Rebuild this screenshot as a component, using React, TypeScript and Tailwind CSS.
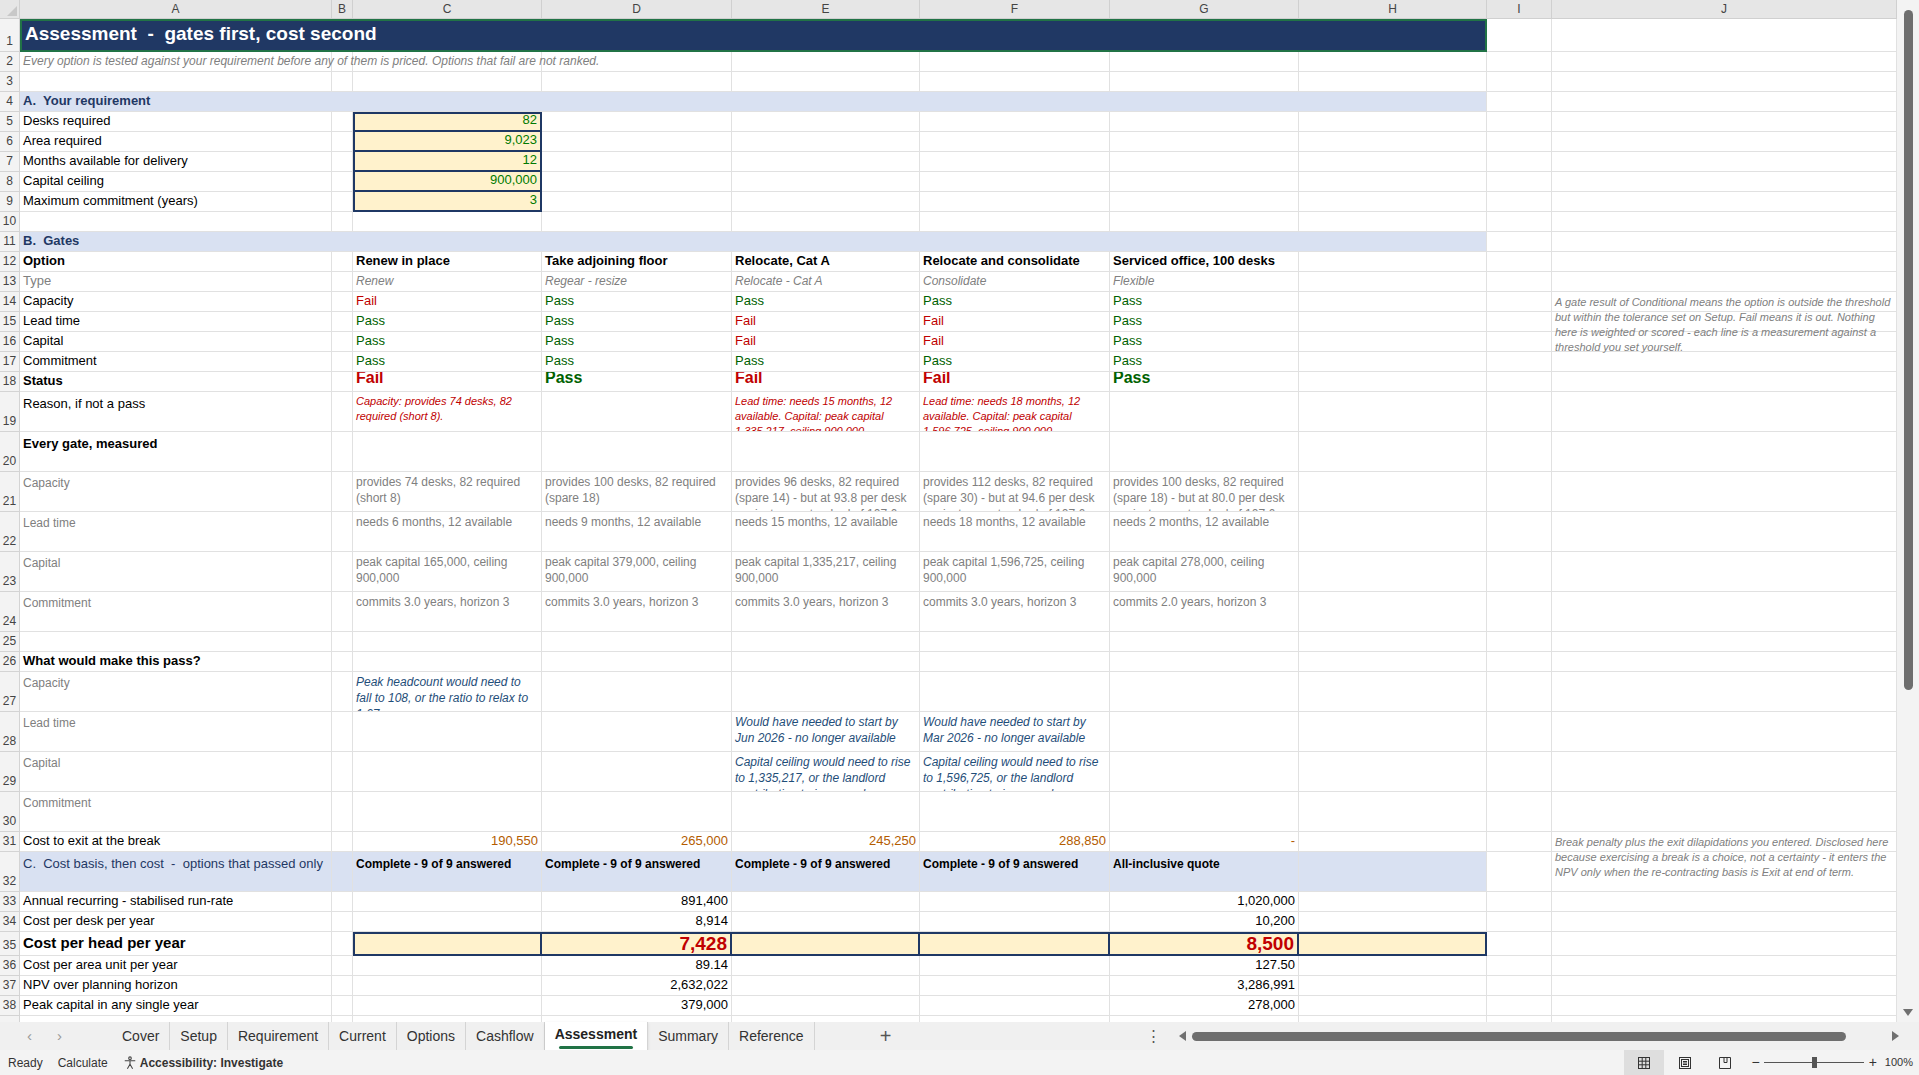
import React from "react";
import { twMerge } from "tailwind-merge";

const W = [312, 21, 189, 190, 188, 190, 189, 188, 65, 345];
const COLS = ["A", "B", "C", "D", "E", "F", "G", "H", "I", "J"];
const FONT = { fontFamily: "'Liberation Sans Narrow','Liberation Sans',Arial,sans-serif" };

type Cell = { t?: React.ReactNode; c?: string; span?: number; ov?: boolean };
type Row = { n: number; h: number; cells: (Cell | null)[] };

const P = (t: string, big = false): Cell => ({
  t,
  c: (t === "Pass" ? "text-[#006100]" : "text-[#c00000]") + (big ? " font-bold text-[16px]" : " text-[13px]"),
});
const grey = "text-[#808080] italic text-[12px]";
const meas = "text-[#808080] text-[12px] leading-[16px] whitespace-normal overflow-hidden items-start pt-[2px]";
const blue = "text-[#1f4e79] italic text-[12px] leading-[16px] whitespace-normal overflow-hidden items-start pt-[2px]";
const red = "text-[#c00000] italic text-[11px] leading-[15px] whitespace-normal overflow-hidden items-start pt-[2px]";
const orange = "text-[#b35c00] text-right text-[13px]";
const num = "text-right text-[13px]";
const inp = "bg-[#fff2cc] text-right text-[#007a00] text-[13px] border-x-2 border-b-2 border-[#1f3864]";
const lab = "text-[#808080] text-[12px] items-start pt-[2px]";

const e = (n: number) => Array(n).fill(null);

const rows: Row[] = [
  {
    n: 1, h: 33,
    cells: [
      { t: "Assessment  -  gates first, cost second", span: 8, c: "bg-[#203864] text-white font-bold text-[19px] border-2 border-[#217346] pb-[2px] whitespace-pre" },
      null, null,
    ],
  },
  { n: 2, h: 20, cells: [{ t: "Every option is tested against your requirement before any of them is priced. Options that fail are not ranked.", ov: true, c: "italic text-[#808080] text-[12px]" }, ...e(9)] },
  { n: 3, h: 20, cells: e(10) },
  { n: 4, h: 20, cells: [{ t: "A.  Your requirement", span: 8, c: "bg-[#d9e1f2] text-[#1f3864] font-bold text-[13px] whitespace-pre" }, null, null] },
  { n: 5, h: 20, cells: [{ t: "Desks required" }, null, { t: "82", c: inp + " border-t-2" }, ...e(7)] },
  { n: 6, h: 20, cells: [{ t: "Area required" }, null, { t: "9,023", c: inp }, ...e(7)] },
  { n: 7, h: 20, cells: [{ t: "Months available for delivery" }, null, { t: "12", c: inp }, ...e(7)] },
  { n: 8, h: 20, cells: [{ t: "Capital ceiling" }, null, { t: "900,000", c: inp }, ...e(7)] },
  { n: 9, h: 20, cells: [{ t: "Maximum commitment (years)" }, null, { t: "3", c: inp }, ...e(7)] },
  { n: 10, h: 20, cells: e(10) },
  { n: 11, h: 20, cells: [{ t: "B.  Gates", span: 8, c: "bg-[#d9e1f2] text-[#1f3864] font-bold text-[13px] whitespace-pre" }, null, null] },
  {
    n: 12, h: 20,
    cells: [{ t: "Option", c: "font-bold" }, null,
      ...["Renew in place", "Take adjoining floor", "Relocate, Cat A", "Relocate and consolidate", "Serviced office, 100 desks"].map((t) => ({ t, c: "font-bold text-[13px]" })),
      null, null, null],
  },
  {
    n: 13, h: 20,
    cells: [{ t: "Type", c: "text-[#808080]" }, null,
      ...["Renew", "Regear - resize", "Relocate - Cat A", "Consolidate", "Flexible"].map((t) => ({ t, c: grey })),
      null, null, null],
  },
  {
    n: 14, h: 20,
    cells: [{ t: "Capacity" }, null, P("Fail"), P("Pass"), P("Pass"), P("Pass"), P("Pass"), null, null,
      { t: "A gate result of Conditional means the option is outside the threshold but within the tolerance set on Setup. Fail means it is out. Nothing here is weighted or scored - each line is a measurement against a threshold you set yourself.", c: "italic text-[#808080] text-[11px] leading-[15px] whitespace-normal items-start pt-[3px] [&>span]:w-[380px]", ov: true }],
  },
  { n: 15, h: 20, cells: [{ t: "Lead time" }, null, P("Pass"), P("Pass"), P("Fail"), P("Fail"), P("Pass"), ...e(3)] },
  { n: 16, h: 20, cells: [{ t: "Capital" }, null, P("Pass"), P("Pass"), P("Fail"), P("Fail"), P("Pass"), ...e(3)] },
  { n: 17, h: 20, cells: [{ t: "Commitment" }, null, P("Pass"), P("Pass"), P("Pass"), P("Pass"), P("Pass"), ...e(3)] },
  { n: 18, h: 20, cells: [{ t: "Status", c: "font-bold" }, null, P("Fail", true), P("Pass", true), P("Fail", true), P("Fail", true), P("Pass", true), ...e(3)] },
  {
    n: 19, h: 40,
    cells: [{ t: "Reason, if not a pass", c: "items-start pt-[2px]" }, null,
      { t: "Capacity: provides 74 desks, 82 required (short 8).", c: red }, null,
      { t: "Lead time: needs 15 months, 12 available. Capital: peak capital 1,335,217, ceiling 900,000", c: red },
      { t: "Lead time: needs 18 months, 12 available. Capital: peak capital 1,596,725, ceiling 900,000", c: red },
      null, null, null, null],
  },
  { n: 20, h: 40, cells: [{ t: "Every gate, measured", c: "font-bold items-start pt-[2px]" }, ...e(9)] },
  ...([
    ["Capacity", ["provides 74 desks, 82 required (short 8)", "provides 100 desks, 82 required (spare 18)", "provides 96 desks, 82 required (spare 14) - but at 93.8 per desk against your standard of 107.6 - a", "provides 112 desks, 82 required (spare 30) - but at 94.6 per desk against your standard of 107.6 - a", "provides 100 desks, 82 required (spare 18) - but at 80.0 per desk against your standard of 107.6 - a"]],
    ["Lead time", ["needs 6 months, 12 available", "needs 9 months, 12 available", "needs 15 months, 12 available", "needs 18 months, 12 available", "needs 2 months, 12 available"]],
    ["Capital", ["peak capital 165,000, ceiling 900,000", "peak capital 379,000, ceiling 900,000", "peak capital 1,335,217, ceiling 900,000", "peak capital 1,596,725, ceiling 900,000", "peak capital 278,000, ceiling 900,000"]],
    ["Commitment", ["commits 3.0 years, horizon 3", "commits 3.0 years, horizon 3", "commits 3.0 years, horizon 3", "commits 3.0 years, horizon 3", "commits 2.0 years, horizon 3"]],
  ] as [string, string[]][]).map(([l, v], i) => ({
    n: 21 + i, h: 40,
    cells: [{ t: l, c: lab }, null, ...v.map((t) => ({ t, c: meas })), null, null, null],
  })),
  { n: 25, h: 20, cells: e(10) },
  { n: 26, h: 20, cells: [{ t: "What would make this pass?", c: "font-bold" }, ...e(9)] },
  {
    n: 27, h: 40,
    cells: [{ t: "Capacity", c: lab }, null,
      { t: "Peak headcount would need to fall to 108, or the ratio to relax to 1.67", c: blue }, ...e(7)],
  },
  {
    n: 28, h: 40,
    cells: [{ t: "Lead time", c: lab }, null, null, null,
      { t: "Would have needed to start by Jun 2026 - no longer available", c: blue },
      { t: "Would have needed to start by Mar 2026 - no longer available", c: blue }, ...e(4)],
  },
  {
    n: 29, h: 40,
    cells: [{ t: "Capital", c: lab }, null, null, null,
      { t: "Capital ceiling would need to rise to 1,335,217, or the landlord contribution to increase by", c: blue },
      { t: "Capital ceiling would need to rise to 1,596,725, or the landlord contribution to increase by", c: blue }, ...e(4)],
  },
  { n: 30, h: 40, cells: [{ t: "Commitment", c: lab }, ...e(9)] },
  {
    n: 31, h: 20,
    cells: [{ t: "Cost to exit at the break" }, null, { t: "190,550", c: orange }, { t: "265,000", c: orange }, { t: "245,250", c: orange }, { t: "288,850", c: orange }, { t: "-", c: orange }, null, null,
      { t: "Break penalty plus the exit dilapidations you entered. Disclosed here because exercising a break is a choice, not a certainty - it enters the NPV only when the re-contracting basis is Exit at end of term.", c: "italic text-[#808080] text-[11px] leading-[15px] whitespace-normal items-start pt-[3px] [&>span]:w-[370px]", ov: true }],
  },
  {
    n: 32, h: 40,
    cells: [{ t: "C.  Cost basis, then cost  -  options that passed only", c: "bg-[#d9e1f2] text-[#1f3864] text-[13px] whitespace-pre items-start pt-[2px]" },
      { c: "bg-[#d9e1f2]" },
      ...["Complete - 9 of 9 answered", "Complete - 9 of 9 answered", "Complete - 9 of 9 answered", "Complete - 9 of 9 answered", "All-inclusive quote"].map((t) => ({ t, c: "bg-[#d9e1f2] font-bold text-[12px] items-start pt-[3px]" })),
      { c: "bg-[#d9e1f2]" }, null, null],
  },
  { n: 33, h: 20, cells: [{ t: "Annual recurring - stabilised run-rate" }, null, null, { t: "891,400", c: num }, null, null, { t: "1,020,000", c: num }, null, null, null] },
  { n: 34, h: 20, cells: [{ t: "Cost per desk per year" }, null, null, { t: "8,914", c: num }, null, null, { t: "10,200", c: num }, null, null, null] },
  {
    n: 35, h: 24,
    cells: [{ t: "Cost per head per year", c: "font-bold text-[15px]" }, null,
      ...[null, "7,428", null, null, "8,500", null].map((t, i) => ({ t, c: "bg-[#fff2cc] border-y-2 border-[#1f3864] text-right text-[#c00000] font-bold text-[19px] leading-[20px] pb-0 " + (i === 0 ? "border-l-2 " : "") + "border-r-2" })),
      null, null],
  },
  { n: 36, h: 20, cells: [{ t: "Cost per area unit per year" }, null, null, { t: "89.14", c: num }, null, null, { t: "127.50", c: num }, null, null, null] },
  { n: 37, h: 20, cells: [{ t: "NPV over planning horizon" }, null, null, { t: "2,632,022", c: num }, null, null, { t: "3,286,991", c: num }, null, null, null] },
  { n: 38, h: 20, cells: [{ t: "Peak capital in any single year" }, null, null, { t: "379,000", c: num }, null, null, { t: "278,000", c: num }, null, null, null] },
];

function SheetRow({ r }: { r: Row }) {
  const out: React.ReactNode[] = [];
  let col = 0;
  let k = 0;
  for (const cell of r.cells) {
    if (col >= 10) break;
    const span = cell?.span ?? 1;
    const w = W.slice(col, col + span).reduce((a, b) => a + b, 0);
    const isNum = !!cell?.c?.includes("text-right");
    out.push(
      <div
        key={k++}
        style={{ width: w, height: r.h }}
        className={twMerge(
          "shrink-0 flex px-[3px] border-r border-b border-[#e1e1e1] text-[13px] text-black whitespace-nowrap relative items-end pb-[1px]",
          isNum ? "justify-end" : "",
          cell?.ov ? "overflow-visible z-10" : "overflow-hidden",
          cell?.c ?? ""
        )}
      >
        {cell?.t != null && <span className={cell?.ov ? "block" : "block w-full " + (isNum ? "text-right" : "")}>{cell.t}</span>}
      </div>
    );
    col += span;
  }
  return (
    <div className="flex">
      <div style={{ height: r.h }} className="w-[20px] shrink-0 bg-[#f3f3f3] border-r border-b border-[#d4d4d4] text-[12px] text-[#444] flex items-end justify-center pb-[1px]">
        {r.n}
      </div>
      {out}
    </div>
  );
}

const tabs = ["Cover", "Setup", "Requirement", "Current", "Options", "Cashflow", "Assessment", "Summary", "Reference"];

export default function App() {
  return (
    <div style={FONT} className="w-[1919px] h-[1075px] overflow-hidden bg-white flex flex-col">
      <div className="flex h-[1022px] overflow-hidden">
        <div className="w-[1897px] shrink-0 overflow-hidden flex flex-col">
          <div className="flex h-[19px] shrink-0 bg-[#e6e6e6] border-b border-[#d0d0d0]">
            <div className="w-[20px] shrink-0 border-r border-[#d0d0d0] flex items-end justify-end p-[2px]">
              <div className="w-0 h-0 border-l-[10px] border-l-transparent border-b-[10px] border-b-[#c8c8c8]" />
            </div>
            {COLS.map((c, i) => (
              <div key={c} style={{ width: W[i] }} className="shrink-0 border-r border-[#d0d0d0] text-[12px] text-[#444] flex items-center justify-center">
                {c}
              </div>
            ))}
          </div>
          {rows.map((r) => (
            <SheetRow key={r.n} r={r} />
          ))}
          <div className="flex h-[10px]">
            <div className="w-[20px] bg-[#f3f3f3] border-r border-[#d4d4d4]" />
            {W.map((w, i) => (
              <div key={i} style={{ width: w }} className="shrink-0 border-r border-[#e1e1e1]" />
            ))}
          </div>
        </div>
        <div className="w-[22px] bg-[#f3f3f3] flex flex-col items-center justify-between pt-[10px] pb-[6px]">
          <div className="w-[9px] h-[680px] rounded-full bg-[#6e6e6e]" />
          <div className="w-0 h-0 border-x-[5px] border-x-transparent border-t-[7px] border-t-[#707070]" />
        </div>
      </div>
      {/* tab bar */}
      <div className="h-[28px] bg-[#f0f0f0] flex items-center text-[14px] text-[#333] pl-[27px]">
        <span className="text-[#999] text-[15px] w-[30px]">‹</span>
        <span className="text-[#999] text-[15px] w-[55px]">›</span>
        <div className="h-[28px] flex items-stretch">
          {tabs.map((t) => (
            <div key={t} className={"px-[10px] flex items-center border-r border-[#d4d4d4] " + (t === "Assessment" ? "bg-white font-bold text-[#222] flex-col justify-center shadow-sm" : "")}>
              <span>{t}</span>
              {t === "Assessment" && <div className="h-[3px] w-[74px] bg-[#217346] rounded mt-[1px]" />}
            </div>
          ))}
        </div>
        <span className="text-[20px] text-[#555] ml-[65px]">+</span>
        <span className="text-[15px] text-[#555] ml-[255px]">⋮</span>
        <div className="ml-[18px] w-0 h-0 border-y-[5px] border-y-transparent border-r-[7px] border-r-[#707070]" />
        <div className="ml-[6px] w-[654px] h-[9px] rounded-full bg-[#6e6e6e]" />
        <div className="ml-[46px] w-0 h-0 border-y-[5px] border-y-transparent border-l-[7px] border-l-[#707070]" />
      </div>
      {/* status bar */}
      <div className="h-[25px] bg-[#f3f3f3] flex items-center text-[12px] text-[#333] pl-[8px]">
        <span>Ready</span>
        <span className="ml-[15px]">Calculate</span>
        <span className="ml-[15px] flex items-center gap-[3px] font-bold">
          <svg width="14" height="14" viewBox="0 0 16 16" fill="none" stroke="#444" strokeWidth="1.2">
            <circle cx="8" cy="2.5" r="1.5" />
            <path d="M2 5.5h12M8 5.5v4M8 9.5l-3 5M8 9.5l3 5" />
          </svg>
          Accessibility: Investigate
        </span>
        <div className="flex-1" />
        <div className="h-[25px] w-[40px] bg-[#dedede] flex items-center justify-center">
          <svg width="14" height="14" viewBox="0 0 14 14" fill="none" stroke="#333" strokeWidth="1">
            <rect x="1.5" y="1.5" width="11" height="11" />
            <path d="M1.5 5.2h11M1.5 8.8h11M5.2 1.5v11M8.8 1.5v11" />
          </svg>
        </div>
        <svg className="ml-[14px]" width="14" height="14" viewBox="0 0 14 14" fill="none" stroke="#333" strokeWidth="1">
          <rect x="1.5" y="1.5" width="11" height="11" />
          <rect x="3.5" y="3.5" width="7" height="7" />
          <path d="M5 5.5h4M5 7h4M5 8.5h4" />
        </svg>
        <svg className="ml-[26px]" width="14" height="14" viewBox="0 0 14 14" fill="none" stroke="#333" strokeWidth="1">
          <path d="M1.5 1.5h11v11h-11zM6 1.5v5h3v-5" />
        </svg>
        <span className="ml-[19px] text-[14px]">−</span>
        <div className="ml-[4px] w-[100px] h-[11px] flex items-center">
          <div className="w-[48px] h-px bg-[#555]" />
          <div className="w-[5px] h-[11px] bg-[#555]" />
          <div className="flex-1 h-px bg-[#555]" />
        </div>
        <span className="ml-[5px] text-[14px]">+</span>
        <span className="ml-[8px] mr-[6px] text-[11px]">100%</span>
      </div>
    </div>
  );
}
